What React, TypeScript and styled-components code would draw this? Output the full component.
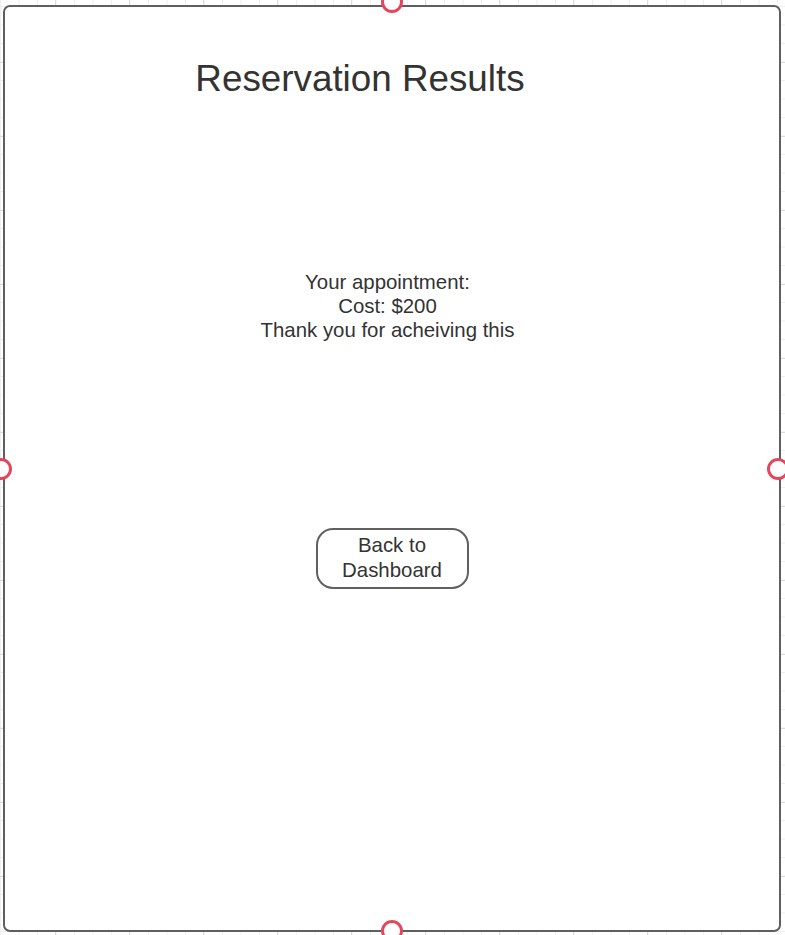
import React from "react";
import styled, { createGlobalStyle } from "styled-components";

const GlobalStyle = createGlobalStyle`
  html, body {
    margin: 0;
    padding: 0;
  }
  body {
    width: 785px;
    height: 935px;
    overflow: hidden;
    background-color: #ffffff;
    background-image:
      linear-gradient(to right, #dcdcdc 1px, transparent 1px),
      linear-gradient(to bottom, #dcdcdc 1px, transparent 1px),
      linear-gradient(to right, #efefef 1px, transparent 1px),
      linear-gradient(to bottom, #efefef 1px, transparent 1px);
    background-size: 74px 74px, 74px 74px, 18.5px 18.5px, 18.5px 18.5px;
    background-position: 55px 0, 0 62px, 0 0, 0 6px;
    font-family: "Liberation Sans", Arial, sans-serif;
  }
`;

const Canvas = styled.div`
  box-sizing: border-box;
  width: 785px;
  height: 935px;
  padding: 5px 4px 3px 3px;
`;

const Frame = styled.div`
  position: relative;
  box-sizing: border-box;
  width: 778px;
  height: 927px;
  border: 2px solid #5f5f5f;
  border-radius: 7px;
  background: #ffffff;
  display: flex;
  flex-direction: column;
  align-items: center;
  color: #333333;
`;

type Side = "top" | "bottom" | "left" | "right";

const handlePos: Record<Side, string> = {
  top: "left: 50%; top: -5px;",
  bottom: "left: 50%; top: calc(100% + 0.5px);",
  left: "left: -4px; top: 50%;",
  right: "left: calc(100% - 1px); top: 50%;",
};

const Handle = styled.span<{ $side: Side }>`
  position: absolute;
  box-sizing: border-box;
  width: 22px;
  height: 22px;
  border-radius: 50%;
  border: 3px solid #e2475d;
  background: #ffffff;
  transform: translate(-50%, -50%);
  ${(p) => handlePos[p.$side]}
`;

const Title = styled.h1`
  margin: 51px 64px 0 0;
  font-family: "Liberation Sans", Arial, sans-serif;
  font-weight: 400;
  font-size: 36.8px;
  line-height: 41px;
  color: #333333;
`;

const Message = styled.div`
  margin: 171px 9px 0 0;
  font-size: 20.4px;
  line-height: 24px;
  text-align: center;
`;

const BackButton = styled.button`
  box-sizing: border-box;
  margin-top: 186px;
  width: 153px;
  height: 61px;
  padding: 0 6px 2px;
  border: 2px solid #606060;
  border-radius: 17px;
  background: #ffffff;
  color: #333333;
  font-family: "Liberation Sans", Arial, sans-serif;
  font-size: 20.4px;
  line-height: 25px;
  text-align: center;
  cursor: pointer;
`;

export default function App() {
  return (
    <>
      <GlobalStyle />
      <Canvas>
        <Frame>
          <Title>Reservation Results</Title>
          <Message>
            <div>Your appointment:</div>
            <div>Cost: $200</div>
            <div>Thank you for acheiving this</div>
          </Message>
          <BackButton>Back to Dashboard</BackButton>
          <Handle $side="top" />
          <Handle $side="bottom" />
          <Handle $side="left" />
          <Handle $side="right" />
        </Frame>
      </Canvas>
    </>
  );
}
